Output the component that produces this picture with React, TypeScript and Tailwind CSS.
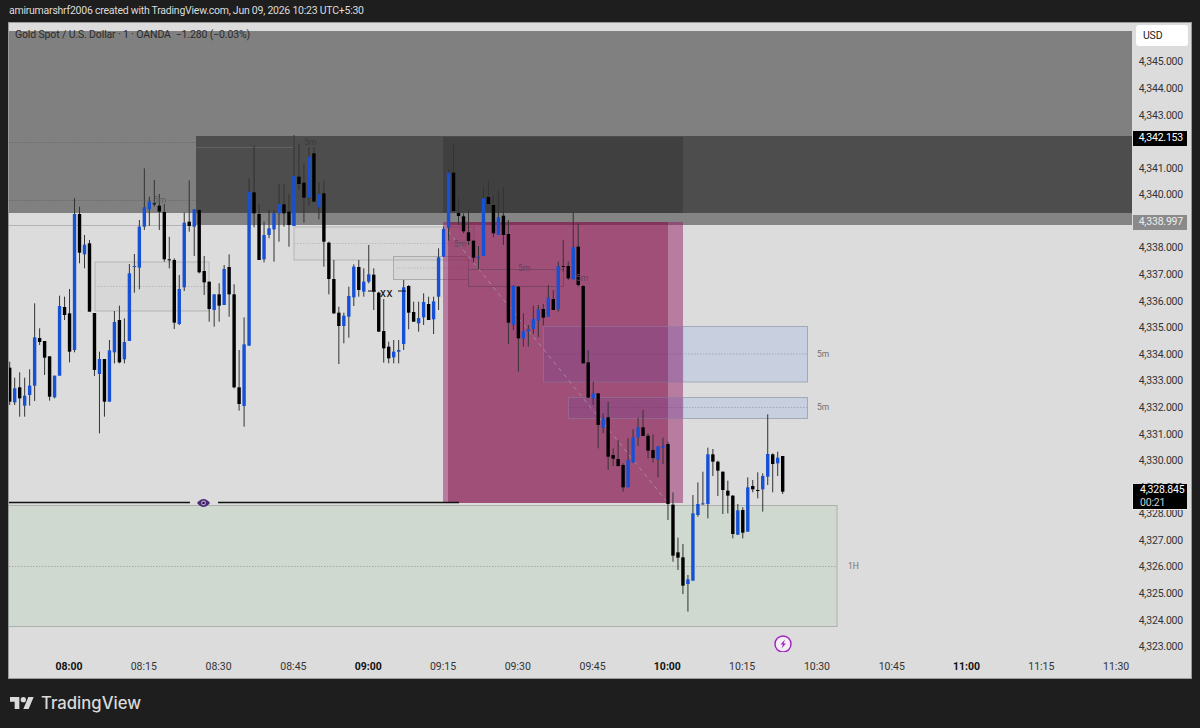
import React from "react";

type C = [number, number, number, number, number];
// [color 0 black / 1 blue, wickTop, bodyTop, bodyBottom, wickBottom], read off in crop units
const A: C[] = [
[0,485,503,605,615],[1,533,565,607,615],[0,517,562,595,650],[1,533,587,617,650],[1,508,557,585,617],[1,310,412,557,603],[0,385,414,426,435],[0,423,423,473,525],[0,468,469,590,602],[1,527,527,592,595],
[1,287,318,527,527],[0,290,321,345,360],[0,267,340,455,487],[1,-5,42,450,457],[0,20,42,158,190],[1,105,134,163,205],[0,120,130,335,335],[0,339,339,510,528],[1,455,477,522,700],[0,477,477,605,650],
[1,420,451,605,605],[1,333,366,457,490],[0,317,360,487,490],[1,355,426,478,490],[1,192,220,423,423],[1,162,198,201,278],[1,60,80,203,268],[1,-95,22,80,90],[1,-10,5,28,78],[0,-60,10,12,20],
[0,-18,17,35,90],[0,12,36,178,185],[0,110,178,181,205],[0,175,180,368,387],[1,225,267,372,375],[1,38,68,262,273],[0,-59,65,78,95],[1,27,28,80,168],[0,28,30,217,220],[0,168,213,247,285],
[0,245,245,327,365],[1,283,283,330,380],[0,250,283,317,365],[1,195,207,315,315],[0,163,201,283,350],[0,253,283,562,565],[0,450,562,612,632],[1,352,433,618,680],[1,-65,-25,437,437],[0,-163,-23,40,82],
[0,13,42,180,180],[1,65,105,178,187],[1,28,85,105,115],[1,30,40,88,185],[1,-48,12,40,125],[0,-48,13,40,80],[0,-18,35,75,140],[1,-195,-72,78,78],[0,-170,-70,-48,-30],[0,-110,-52,-7,68],
[1,-158,-130,-7,17],[0,-158,-140,5,5],[1,-53,-18,22,58],[0,-58,-20,125,200],[0,125,128,237,283],[0,180,237,340,342],[0,320,338,378,492],[1,338,347,378,430],[1,260,288,350,413],[1,193,200,292,318],
[0,180,201,270,290],[1,205,245,275,290],[1,135,223,245,250],[0,205,224,275,330],[0,275,278,395,395],[0,297,393,445,488],[0,425,440,475,490],[1,420,455,472,490],[1,420,450,455,490],
];
const B: C[] = [
[1,450,472,642,660],[0,465,468,548,598],[0,515,546,575,575],[1,515,564,580,605],[1,490,516,562,585],[0,500,522,570,570],[1,500,514,568,612],[1,355,382,500,540],[1,290,297,380,380],[1,118,128,293,332],
[0,45,128,243,243],[0,205,249,258,285],[0,250,259,304,310],[0,238,307,333,345],[0,332,332,383,398],[1,348,380,385,418],[1,170,205,378,378],[0,152,201,222,222],[0,195,225,310,322],[1,180,262,315,315],
[0,172,257,315,345],[0,270,312,578,642],[1,465,468,584,600],[0,468,470,625,725],[1,550,604,625,650],[1,585,597,605,650],[1,527,567,597,612],[1,525,538,572,622],[0,522,537,563,587],[1,465,503,560,560],
[0,480,507,540,540],[1,395,408,538,545],[0,330,408,410,425],[0,395,408,445,450],[1,247,352,448,448],[0,280,350,465,470],[0,465,468,700,700],
];
const D: C[] = [
[0,-60,-23,83,83],[1,35,70,85,105],[0,70,70,165,235],[1,130,145,173,190],[0,95,142,260,300],[0,235,255,266,288],[0,210,267,288,290],[0,280,285,352,365],[1,205,270,352,352],[1,178,202,278,278],
[1,143,172,202,228],[0,120,172,198,198],[0,190,197,242,265],[0,193,240,264,278],[1,229,229,269,322],[1,203,227,233,282],[0,215,222,402,450],[0,367,404,557,575],[0,503,547,563,600],[0,522,562,647,672],
[1,615,628,642,725],[1,375,430,632,632],[1,337,402,435,440],[1,305,400,402,405],[1,233,253,402,445],[0,237,253,275,318],[0,272,275,302,378],[0,305,305,360,432],[0,332,362,377,430],[0,375,377,492,505],
[1,402,421,494,495],[0,412,420,488,505],[1,322,352,485,485],[0,330,348,358,367],[0,307,360,362,385],[1,310,318,358,425],[1,133,252,320,345],[0,250,253,282,367],[1,245,263,280,318],[0,258,258,365,372],
];

const candles = [
  ...A.map((c, i) => ({ c, i, o: 200 })),
  ...B.map((c, i) => ({ c, i: i + 79, o: 130 })),
  ...D.map((c, i) => ({ c, i: i + 116, o: 370 })),
];

const prices = ["4,345.000","4,344.000","4,343.000","","4,341.000","4,340.000","","4,338.000","4,337.000","4,336.000","4,335.000","4,334.000","4,333.000","4,332.000","4,331.000","4,330.000","4,329.000","4,328.000","4,327.000","4,326.000","4,325.000","4,324.000","4,323.000"];
const times: [string, boolean][] = [["08:00",true],["08:15",false],["08:30",false],["08:45",false],["09:00",true],["09:15",false],["09:30",false],["09:45",false],["10:00",true],["10:15",false],["10:30",false],["10:45",false],["11:00",true],["11:15",false],["11:30",false]];
const font = { fontFamily: "Roboto, sans-serif" };

function Chart() {
  return (
    <svg viewBox="9 23 1123 629" className="block w-[1123px] h-[629px]">
      <rect x="9" y="31" width="1123" height="182" fill="#000" fillOpacity="0.42" />
      <rect x="196" y="136" width="936" height="89" fill="#000" fillOpacity="0.4" />
      <rect x="443" y="137" width="240" height="76" fill="#000" fillOpacity="0.17" />
      {/* thin boxes */}
      <line x1="9" x2="196" y1="142.5" y2="142.5" stroke="#6a6a6a" strokeWidth="1" strokeDasharray="1.5 1.5" />
      <line x1="9" x2="196" y1="200.5" y2="200.5" stroke="#6a6a6a" strokeWidth="1" strokeDasharray="1.5 1.5" />
      <line x1="9" x2="196" y1="225.5" y2="225.5" stroke="#b4b4b4" strokeWidth="1" />
      <line x1="196" x2="293" y1="147.5" y2="147.5" stroke="#626262" strokeWidth="1" />
      <line x1="293.5" x2="293.5" y1="136" y2="148" stroke="#585858" strokeWidth="1" />
      <rect x="95" y="262" width="114" height="49" fill="#000" fillOpacity="0.02" stroke="#b4b4b4" strokeWidth="1" />
      <line x1="95" x2="209" y1="286.5" y2="286.5" stroke="#b8b8b8" strokeWidth="1" strokeDasharray="1.5 1.5" />
      <rect x="294" y="227" width="180" height="33" fill="#000" fillOpacity="0.015" stroke="#b4b4b4" strokeWidth="1" />
      <line x1="294" x2="474" y1="243.5" y2="243.5" stroke="#bcbcbc" strokeWidth="1" strokeDasharray="1.5 1.5" />
      <rect x="393.5" y="256.5" width="75" height="23" fill="#000" fillOpacity="0.02" stroke="#ababab" strokeWidth="1" />
      <line x1="393" x2="468" y1="268" y2="268" stroke="#bcbcbc" strokeWidth="1" strokeDasharray="1.5 1.5" />
      {/* blue zones */}
      <rect x="543.5" y="326.5" width="264" height="55.5" fill="#c8d0e0" stroke="#a3a9b8" strokeWidth="1" />
      <line x1="544" x2="807" y1="354" y2="354" stroke="#a2a8b8" strokeWidth="1" strokeDasharray="1.5 1.5" />
      <rect x="568.5" y="397.5" width="239" height="21" fill="#c8d0e0" stroke="#a3a9b8" strokeWidth="1" />
      <line x1="569" x2="807" y1="407.5" y2="407.5" stroke="#a2a8b8" strokeWidth="1" strokeDasharray="1.5 1.5" />
      {/* pink */}
      <rect x="443" y="222" width="240" height="281" fill="rgb(148,28,100)" fillOpacity="0.5" />
      <rect x="448" y="222" width="220" height="281" fill="rgb(115,0,46)" fillOpacity="0.35" />
      <rect x="468.5" y="269.5" width="95" height="17" fill="none" stroke="#7c4566" strokeWidth="1" />
      {/* the blue zones read purple where they cross the pink */}
      <rect x="543.5" y="326.5" width="139.5" height="55.5" fill="#5a50c8" fillOpacity="0.1" stroke="#a698b4" strokeOpacity="0.45" strokeWidth="1" />
      <rect x="568.5" y="397.5" width="114.5" height="21" fill="#5a50c8" fillOpacity="0.1" stroke="#a698b4" strokeOpacity="0.45" strokeWidth="1" />
      {/* green zone */}
      <rect x="8" y="505.5" width="829" height="121" fill="#cfd9cf" stroke="#aab0aa" strokeWidth="1" />
      <line x1="9" x2="837" y1="566.5" y2="566.5" stroke="#a5aca5" strokeWidth="1" strokeDasharray="1.5 1.5" />
      {/* diagonal */}
      <line x1="443" y1="225" x2="668" y2="503" stroke="#a9a0a6" strokeOpacity="0.7" strokeWidth="1" strokeDasharray="4 4" />
      {/* horizontal ray */}
      <line x1="9" x2="190" y1="502.5" y2="502.5" stroke="#111" strokeWidth="1.4" />
      <line x1="218" x2="459" y1="502.5" y2="502.5" stroke="#111" strokeWidth="1.4" />
      <path d="M197 503 Q203.5 495 210 503 Q203.5 511 197 503Z" fill="#4c2a78" />
      <circle cx="203.5" cy="503" r="2.4" fill="#b9aecb" />
      <circle cx="203.5" cy="503" r="1.3" fill="#2c1650" />
      {/* candles */}
      {candles.map(({ c, i, o }) => {
        const x = 9.7 + 4.987 * i;
        const col = c[0] ? "#1650d4" : "#000";
        return (
          <g key={i}>
            <line x1={x} x2={x} y1={o + c[1] / 3} y2={o + c[4] / 3} stroke="#333" strokeWidth="1" />
            <rect x={x - 1.7} y={o + c[2] / 3} width="3.4" height={Math.max(1, (c[3] - c[2]) / 3)} fill={col} />
          </g>
        );
      })}
      {/* drawing labels */}
      <g style={font} fontSize="8.5">
        <text x="454" y="247" fill="#5f4a58">5m</text>
        <text x="518" y="271" fill="#66405a">5m</text>
        <text x="576" y="281" fill="#66405a">5m</text>
        <text x="817" y="357" fill="#707070">5m</text>
        <text x="817" y="410" fill="#707070">5m</text>
        <text x="848" y="569" fill="#707070">1H</text>
        <text x="154" y="203" fill="#5f5f5f">5m</text>
        <text x="304" y="145" fill="#3a3a3a">5m</text>
      </g>
      <text x="380" y="297" style={font} fontSize="12" letterSpacing="0.6" fill="#111">xx</text>
      <line x1="368" x2="376" y1="291" y2="291" stroke="#111" strokeWidth="1" />
      <line x1="398" x2="406" y1="291" y2="291" stroke="#111" strokeWidth="1" />
      {/* lightning */}
      <circle cx="783" cy="644" r="8" fill="#f4eef6" stroke="#a21fc4" strokeWidth="1.4" />
      <path d="M785 639.5 L780.5 644.5 L783 644.5 L781.5 648.5 L786 643.5 L783.5 643.5 Z" fill="#a21fc4" />
    </svg>
  );
}

export default function App() {
  return (
    <div className="w-[1200px] h-[728px] bg-[#1e1e1e] flex flex-col overflow-hidden" style={font}>
      <div className="h-[22px] pl-[9px] flex items-center text-[10.5px] leading-none text-[#dcdcdc] tracking-[-0.24px] whitespace-nowrap">
        amirumarshrf2006 created with TradingView.com, Jun 09, 2026 10:23 UTC+5:30
      </div>
      <div className="ml-[8px] w-[1184px] h-[657px] border border-[#9a9a9a] bg-[#dcdcdc] flex">
        <div className="w-[1123px] flex flex-col relative">
          <Chart />
          <div className="absolute left-[6px] top-[5px] text-[10.5px] leading-[14px] whitespace-pre text-[#2c2c2c] tracking-[-0.14px]">
            Gold Spot / U.S. Dollar · 1 · OANDA  −1.280 (−0.03%)
          </div>
          <div className="flex pl-[22.6px] h-[26px] items-center pt-[4px]">
            {times.map(([t, bold]) => (
              <div key={t} className={`w-[74.8px] shrink-0 text-center text-[10.5px] ${bold ? "font-bold text-[#111]" : "text-[#333]"}`}>{t}</div>
            ))}
          </div>
        </div>
        <div className="relative flex-1 flex flex-col">
          <div className="mt-[2px] ml-[4px] w-[52px] h-[21px] bg-white rounded-[3px] flex items-center pl-[7px] pt-[1px] text-[10.5px] tracking-[-0.2px] text-[#222]">USD</div>
          <div className="mt-[3px] flex flex-col">
            {prices.map((p, i) => (
              <div key={i} className="h-[26.59px] flex items-center justify-end pr-[8px] text-[10.5px] tracking-[-0.2px] text-[#333]">{p}</div>
            ))}
          </div>
          <div className="absolute left-[1px] top-[108px] w-[54px] h-[14.5px] bg-black text-white text-[10.5px] tracking-[-0.2px] flex items-center justify-end pr-[4px]">4,342.153</div>
          <div className="absolute left-[1px] top-[192px] w-[54px] h-[14.5px] bg-[#8a8a8a] text-[#eee] text-[10.5px] tracking-[-0.2px] flex items-center justify-end pr-[4px]">4,338.997</div>
          <div className="absolute left-0 top-[461px] w-[55px] h-[26px] bg-black border-l border-b border-[#e8e8e8] text-[10.5px] tracking-[-0.2px] flex flex-col justify-center pl-[7px] leading-[12.5px]">
            <span className="text-white">4,328.845</span>
            <span className="text-[#cfcfcf]">00:21</span>
          </div>
        </div>
      </div>
      <div className="flex-1 flex items-center pl-[10px] gap-[7px] pb-[1px]">
        <svg viewBox="0 4 36 18" className="w-[24px] h-[12px] text-[#dadada]" fill="currentColor">
          <path d="M14 22H7V11H0V4h14v18zM28 22h-8l7.5-18h8L28 22z" />
          <circle cx="20" cy="8" r="4" />
        </svg>
        <span className="text-[16.7px] leading-none font-medium text-[#dadada]" style={{ fontFamily: "Inter, sans-serif" }}>TradingView</span>
      </div>
    </div>
  );
}
